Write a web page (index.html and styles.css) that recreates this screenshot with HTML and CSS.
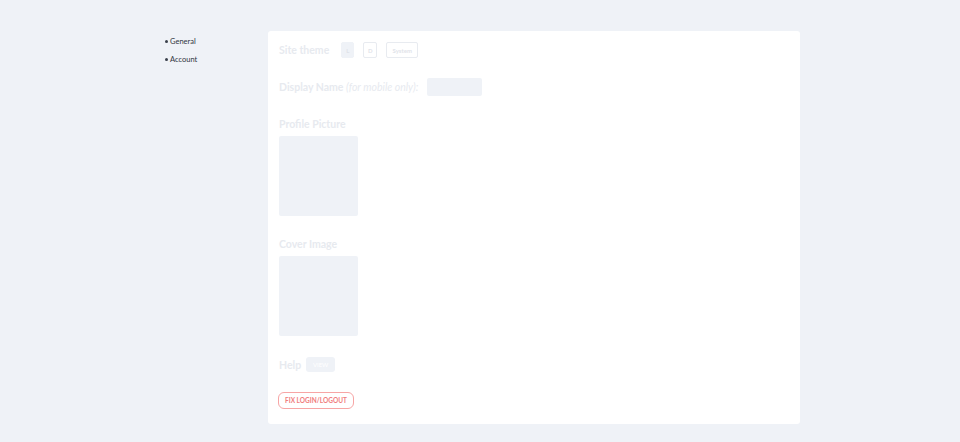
FILE: index.html
```html
<!DOCTYPE html>
<html>
<head>
<meta charset="utf-8">
<link rel="stylesheet" href="styles.css">
</head>
<body>
<div class="layout">
  <ul class="sidenav">
    <li class="nav-item">General</li>
    <li class="nav-item">Account</li>
  </ul>
  <main class="panel">
    <div class="row theme-row">
      <span class="heading">Site theme</span>
      <div class="theme-buttons">
        <button class="tbtn tbtn-active">L</button>
        <button class="tbtn tbtn-d">D</button>
        <button class="tbtn tbtn-sys">System</button>
      </div>
    </div>
    <div class="row name-row">
      <span class="heading">Display Name <em class="note">(for mobile only):</em></span>
      <div class="name-input"></div>
    </div>
    <div class="section">
      <span class="heading">Profile Picture</span>
      <div class="image-box"></div>
    </div>
    <div class="section">
      <span class="heading">Cover Image</span>
      <div class="image-box"></div>
    </div>
    <div class="row help-row">
      <span class="heading">Help</span>
      <button class="view-btn">VIEW</button>
    </div>
    <div class="row">
      <button class="fix-btn">FIX LOGIN/LOGOUT</button>
    </div>
  </main>
</div>
</body>
</html>
```

FILE: styles.css
```css
* { box-sizing: border-box; }
html, body {
  margin: 0;
  padding: 0;
  background: #eff2f7;
  font-family: "Lato", "Noto Sans", sans-serif;
}
.layout {
  display: flex;
  align-items: flex-start;
  padding: 31px 0 0 165px;
}
.sidenav {
  list-style: none;
  margin: 0;
  padding: 5px 0 0 0;
  width: 103px;
  display: flex;
  flex-direction: column;
  gap: 7px;
}
.nav-item {
  font-size: 7.5px;
  line-height: 11px;
  color: #2f3540;
  display: flex;
  align-items: center;
  gap: 2px;
}
.nav-item::before {
  content: "";
  width: 3px;
  height: 3px;
  border-radius: 50%;
  background: #3a404b;
}
.panel {
  width: 532px;
  background: #ffffff;
  border-radius: 3px;
  padding: 11px 11px 15px 11px;
  display: flex;
  flex-direction: column;
  gap: 20px;
}
.row {
  display: flex;
  align-items: center;
}
.heading {
  font-size: 10.5px;
  font-weight: 700;
  line-height: 16px;
  color: #e7eaef;
}
.note {
  font-weight: 400;
  font-style: italic;
}
.theme-row { gap: 12px; height: 16px; }
.theme-buttons { display: flex; gap: 9px; }
.tbtn {
  height: 16px;
  width: 14px;
  padding: 0;
  border: 1px solid #e8ebf0;
  border-radius: 2px;
  background: #ffffff;
  font-family: inherit;
  font-size: 6px;
  font-weight: 700;
  color: #dfe3e9;
}
.tbtn-active {
  background: #eff2f7;
  border-color: #eff2f7;
  width: 13px;
}
.tbtn-sys { width: 32px; }
.name-row { gap: 9px; height: 18px; }
.name-input {
  width: 55px;
  height: 18px;
  background: #eff2f7;
  border-radius: 2px;
}
.section {
  display: flex;
  flex-direction: column;
  gap: 4px;
}
.image-box {
  width: 79px;
  height: 80px;
  background: #eff2f7;
  border-radius: 2px;
}
.help-row { gap: 5px; height: 15px; margin-top: 1px; }
.view-btn {
  width: 29px;
  height: 15px;
  border: none;
  border-radius: 3px;
  background: #eff2f7;
  color: #ffffff;
  font-family: inherit;
  font-size: 6px;
  padding: 0;
}
.fix-btn {
  margin-left: -1px;
  height: 17px;
  width: 76px;
  padding: 0;
  border: 1px solid #f7a5a5;
  border-radius: 6px;
  background: #ffffff;
  color: #f07d7d;
  font-family: inherit;
  font-size: 6.5px;
  font-weight: 700;
}
```
